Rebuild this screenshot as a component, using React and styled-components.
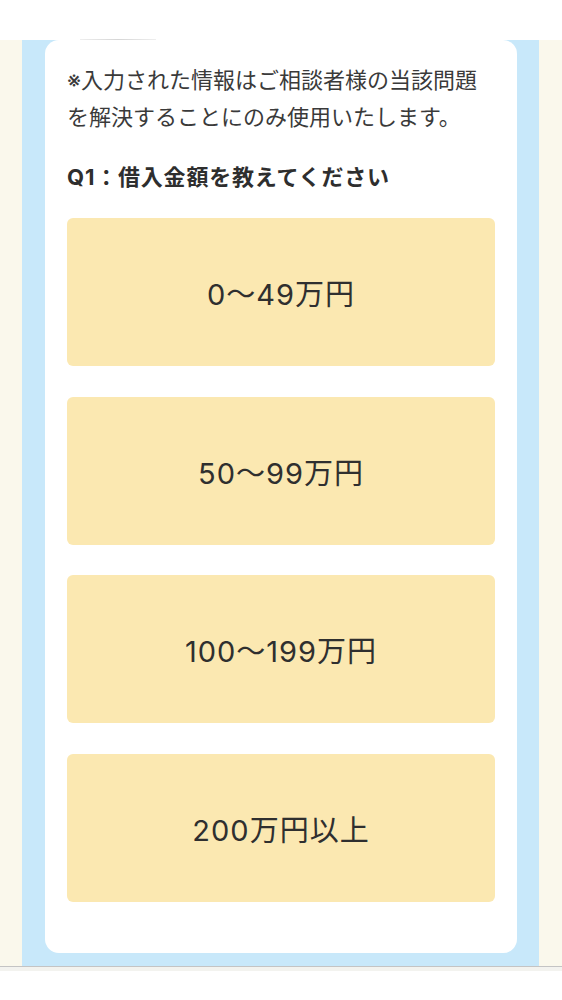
import React from 'react';
import styled, { createGlobalStyle } from 'styled-components';

const GlobalStyle = createGlobalStyle`
  html, body {
    margin: 0;
    padding: 0;
    background: #ffffff;
  }
  body {
    font-family: "Inter", "Noto Sans CJK JP", "Noto Sans", sans-serif;
    color: #333333;
  }
`;

const TopBar = styled.header`
  height: 40px;
  background: #ffffff;
  display: flex;
  align-items: flex-end;
  padding-left: 80px;
`;

const TopShade = styled.div`
  width: 76px;
  height: 1px;
  background: linear-gradient(90deg, #eeeeee, #d6d6d6, #eeeeee);
`;

const Page = styled.main`
  background: #faf8ec;
  padding: 0 23px 0 22px;
`;

const Panel = styled.section`
  background: #c8e8fa;
  padding: 0 22px 13px 23px;
`;

const Card = styled.div`
  background: #ffffff;
  border-radius: 14px;
  padding: 22px 22px 22px 22px;
`;

const Notice = styled.p`
  margin: 0 0 22px;
  font-size: 22px;
  line-height: 1.7;
  color: #3a3a3a;
`;

const Question = styled.h3`
  margin: 0 0 22px;
  font-size: 22px;
  line-height: 1.7;
  font-weight: 700;
  letter-spacing: 0.8px;
  color: #2e2e2e;
`;

const Options = styled.ul`
  list-style: none;
  margin: 0;
  padding: 0 0 29px;
  display: flex;
  flex-direction: column;
  gap: 30.5px;
`;

const Option = styled.li`
  height: 148px;
  display: flex;
  align-items: center;
  justify-content: center;
  background: #fbe8b1;
  border-radius: 6px;
  font-size: 29px;
  letter-spacing: 1px;
  color: #2f2f2f;
  cursor: pointer;
`;

const Footer = styled.footer`
  border-top: 1px solid #c4c4c4;
  height: 4px;
  background: #f3f3ef;
`;

const answers = [
  { id: 'a1', label: '0～49万円' },
  { id: 'a2', label: '50～99万円' },
  { id: 'a3', label: '100～199万円' },
  { id: 'a4', label: '200万円以上' },
];

function App() {
  return (
    <>
      <GlobalStyle />
      <TopBar>
        <TopShade />
      </TopBar>
      <Page>
        <Panel>
          <Card>
            <Notice>※入力された情報はご相談者様の当該問題を解決することにのみ使用いたします。</Notice>
            <Question>Q1：借入金額を教えてください</Question>
            <Options>
              {answers.map((item) => (
                <Option key={item.id}>{item.label}</Option>
              ))}
            </Options>
          </Card>
        </Panel>
      </Page>
      <Footer />
    </>
  );
}

export default App;
